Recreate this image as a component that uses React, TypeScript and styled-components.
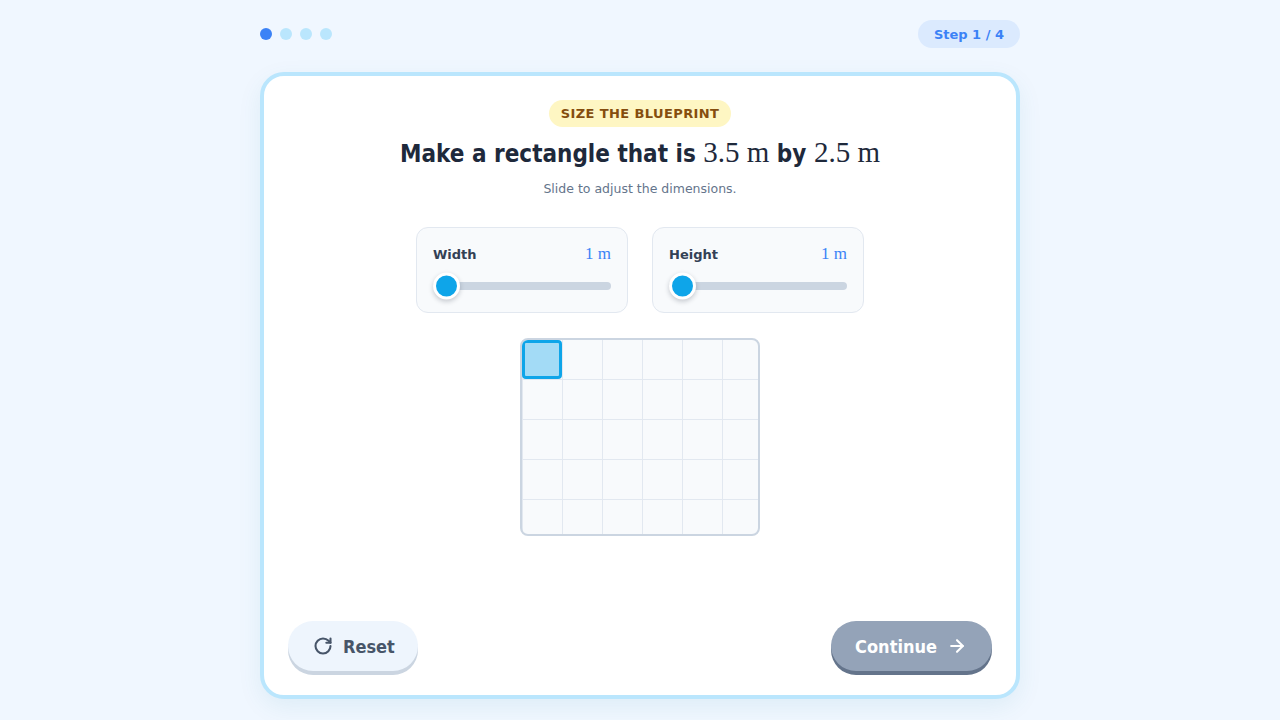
import React from "react";
import styled, { createGlobalStyle } from "styled-components";
import { RotateCw, ArrowRight } from "lucide-react";

const Global = createGlobalStyle`
  html, body { margin: 0; padding: 0; }
  body {
    background: #f0f7ff;
    font-family: "DejaVu Sans", Verdana, sans-serif;
    width: 1280px;
    height: 720px;
    overflow: hidden;
  }
`;

const Page = styled.div`
  width: 760px;
  margin: 0 auto;
  padding-top: 20px;
  display: flex;
  flex-direction: column;
  gap: 24px;
`;

const TopBar = styled.div`
  display: flex;
  align-items: center;
  justify-content: space-between;
  height: 28px;
`;

const Dots = styled.div`
  display: flex;
  gap: 8px;
`;

const Dot = styled.span<{ $active?: boolean }>`
  width: 12px;
  height: 12px;
  border-radius: 50%;
  background: ${(p) => (p.$active ? "#3b82f6" : "#bae6fd")};
`;

const StepPill = styled.div`
  height: 28px;
  padding: 0 16px;
  border-radius: 14px;
  background: #dbeafe;
  color: #3b82f6;
  font-size: 13px;
  font-weight: 700;
  display: flex;
  align-items: center;
`;

const Card = styled.div`
  box-sizing: border-box;
  height: 627px;
  background: #ffffff;
  border: 4px solid #bae6fd;
  border-radius: 24px;
  box-shadow: 0 8px 24px rgba(14, 116, 144, 0.08);
  padding: 24px 24px 20px;
  display: flex;
  flex-direction: column;
  align-items: center;
`;

const Badge = styled.div`
  height: 27px;
  padding: 0 12px;
  border-radius: 14px;
  background: #fef6c3;
  color: #854d0e;
  font-size: 13px;
  font-weight: 700;
  letter-spacing: 0.4px;
  display: flex;
  align-items: center;
`;

const Title = styled.h1`
  margin: 11px 0 0;
  font-family: "DejaVu Sans Condensed", "DejaVu Sans", sans-serif;
  font-stretch: condensed;
  font-size: 24px;
  line-height: 30px;
  height: 30px;
  font-weight: 700;
  color: #1e293b;
  white-space: nowrap;
`;

const Math = styled.span`
  font-family: "Liberation Serif", "Times New Roman", serif;
  font-stretch: normal;
  font-weight: 400;
  font-size: 29px;
  line-height: 1;
`;

const Subtitle = styled.p`
  margin: 13px 0 0;
  font-size: 12.5px;
  color: #64748b;
`;

const Controls = styled.div`
  margin-top: 31px;
  display: flex;
  gap: 24px;
`;

const SliderCard = styled.div`
  box-sizing: border-box;
  width: 212px;
  height: 86px;
  background: #f8fafc;
  border: 1px solid #e2e8f0;
  border-radius: 12px;
  padding: 16px 16px 0 16px;
  display: flex;
  flex-direction: column;
`;

const SliderHead = styled.div`
  display: flex;
  justify-content: space-between;
  align-items: center;
  height: 20px;
`;

const SliderLabel = styled.span`
  font-size: 13px;
  font-weight: 700;
  color: #334155;
`;

const SliderValue = styled.span`
  font-family: "Liberation Serif", "Times New Roman", serif;
  font-size: 17px;
  color: #3b82f6;
`;

const Track = styled.div`
  position: relative;
  margin-top: 18px;
  height: 8px;
  border-radius: 4px;
  background: #cbd5e1;
`;

const Thumb = styled.div`
  position: absolute;
  left: 0;
  top: 50%;
  transform: translateY(-50%);
  width: 21px;
  height: 21px;
  border-radius: 50%;
  background: #0ea5e9;
  border: 3px solid #ffffff;
  box-shadow: 0 2px 5px rgba(15, 23, 42, 0.22);
`;

const Grid = styled.div`
  margin-top: 25px;
  width: 240px;
  height: 198px;
  box-sizing: border-box;
  border: 2px solid #cbd5e1;
  border-radius: 8px;
  background-color: #f8fafc;
  background-image:
    linear-gradient(to right, transparent 39px, #e2e8f0 39px),
    linear-gradient(to bottom, transparent 39px, #e2e8f0 39px);
  background-size: 40px 40px;
  background-position: 1px 0;
  position: relative;
  overflow: hidden;
`;

const Selection = styled.div`
  position: absolute;
  left: 0;
  top: 0;
  width: 40px;
  height: 39px;
  box-sizing: border-box;
  border: 3px solid #0ea5e9;
  border-radius: 4px;
  background: #a3dbf6;
`;

const Spacer = styled.div`
  flex: 1;
`;

const Footer = styled.div`
  align-self: stretch;
  display: flex;
  justify-content: space-between;
  align-items: center;
`;

const Button = styled.button<{ $primary?: boolean }>`
  height: 50px;
  border: none;
  border-radius: 25px;
  padding: ${(p) => (p.$primary ? "0 25px 0 24px" : "0 23px 0 25px")};
  display: flex;
  align-items: center;
  gap: 10px;
  font-family: "DejaVu Sans Condensed", "DejaVu Sans", sans-serif;
  font-stretch: condensed;
  font-size: 18px;
  font-weight: 700;
  margin-bottom: 4px;
  background: ${(p) => (p.$primary ? "#94a3b8" : "#eef5fd")};
  color: ${(p) => (p.$primary ? "#ffffff" : "#475569")};
  box-shadow: 0 4px 0 ${(p) => (p.$primary ? "#64748b" : "#cbd5e1")};
`;

export default function App() {
  return (
    <>
      <Global />
      <Page>
        <TopBar>
          <Dots>
            <Dot $active />
            <Dot />
            <Dot />
            <Dot />
          </Dots>
          <StepPill>Step 1 / 4</StepPill>
        </TopBar>
        <Card>
          <Badge>SIZE THE BLUEPRINT</Badge>
          <Title>
            Make a rectangle that is <Math>3.5 m</Math> by <Math>2.5 m</Math>
          </Title>
          <Subtitle>Slide to adjust the dimensions.</Subtitle>
          <Controls>
            <SliderCard>
              <SliderHead>
                <SliderLabel>Width</SliderLabel>
                <SliderValue>1 m</SliderValue>
              </SliderHead>
              <Track>
                <Thumb />
              </Track>
            </SliderCard>
            <SliderCard>
              <SliderHead>
                <SliderLabel>Height</SliderLabel>
                <SliderValue>1 m</SliderValue>
              </SliderHead>
              <Track>
                <Thumb />
              </Track>
            </SliderCard>
          </Controls>
          <Grid>
            <Selection />
          </Grid>
          <Spacer />
          <Footer>
            <Button>
              <RotateCw size={20} strokeWidth={2.5} />
              Reset
            </Button>
            <Button $primary>
              Continue
              <ArrowRight size={20} strokeWidth={2.5} />
            </Button>
          </Footer>
        </Card>
      </Page>
    </>
  );
}
